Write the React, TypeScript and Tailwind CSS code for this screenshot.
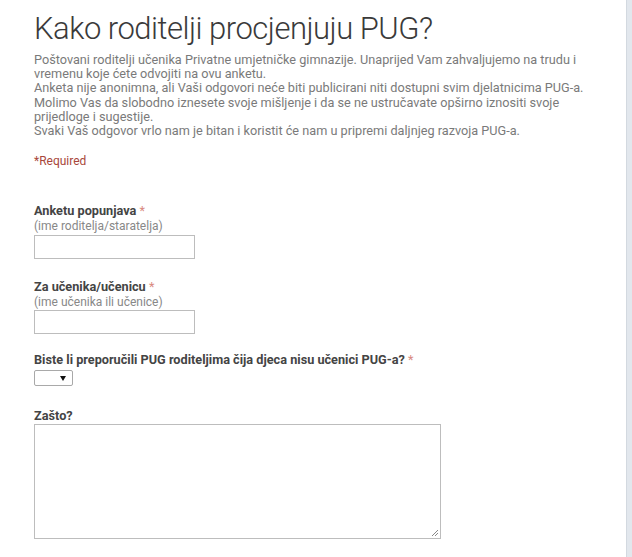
import React from "react";

export default function App() {
  const font = { fontFamily: "Roboto, 'Noto Sans', sans-serif" };
  return (
    <div className="flex h-[557px] w-[632px] overflow-hidden bg-[#e2e7ed]" style={font}>
      <div className="h-full w-[627px] border-r border-[#d3d9e0] bg-white pl-[34px] pt-[10px]">
        <h1 className="text-[31px] font-light leading-[38px] tracking-[-0.5px] text-[#3a3a3a]">
          Kako roditelji procjenjuju PUG?
        </h1>
        <div className="mt-[5px] text-[12.7px] leading-[14.2px] text-[#7a7a7a]">
          <p>Poštovani roditelji učenika Privatne umjetničke gimnazije. Unaprijed Vam zahvaljujemo na trudu i</p>
          <p>vremenu koje ćete odvojiti na ovu anketu.</p>
          <p>Anketa nije anonimna, ali Vaši odgovori neće biti publicirani niti dostupni svim djelatnicima PUG-a.</p>
          <p>Molimo Vas da slobodno iznesete svoje mišljenje i da se ne ustručavate opširno iznositi svoje</p>
          <p>prijedloge i sugestije.</p>
          <p>Svaki Vaš odgovor vrlo nam je bitan i koristit će nam u pripremi daljnjeg razvoja PUG-a.</p>
        </div>
        <div className="mt-[16px] text-[12px] leading-[14px] text-[#a8473b]">*Required</div>

        <div className="mt-[35px]">
          <div className="text-[12.7px] font-bold leading-[16px] text-[#444]">
            Anketu popunjava <span className="font-normal text-[#d98a80]">*</span>
          </div>
          <div className="text-[12px] leading-[15px] text-[#888]">(ime roditelja/staratelja)</div>
          <div className="mt-[1px] h-[24px] w-[161px] border border-[#bdbdbd] bg-white" />
        </div>

        <div className="mt-[20px]">
          <div className="text-[12.7px] font-bold leading-[16px] text-[#444]">
            Za učenika/učenicu <span className="font-normal text-[#d98a80]">*</span>
          </div>
          <div className="text-[12px] leading-[15px] text-[#888]">(ime učenika ili učenice)</div>
          <div className="mt-[0px] h-[24px] w-[161px] border border-[#bdbdbd] bg-white" />
        </div>

        <div className="mt-[18px]">
          <div className="text-[12.7px] font-bold leading-[16px] text-[#444]">
            Biste li preporučili PUG roditeljima čija djeca nisu učenici PUG-a?{" "}
            <span className="font-normal text-[#d98a80]">*</span>
          </div>
          <div className="mt-[2px] flex h-[16px] w-[39px] items-center justify-end rounded-[2px] border border-[#a9a9a9] bg-white pr-[6px]">
            <svg width="6" height="5" viewBox="0 0 6 5">
              <path d="M0 0 H6 L3 5 Z" fill="#111" />
            </svg>
          </div>
        </div>

        <div className="mt-[22px]">
          <div className="text-[12.7px] font-bold leading-[16px] text-[#444]">Zašto?</div>
          <div className="relative mt-0 h-[115px] w-[407px] border border-[#bdbdbd] bg-white">
            <svg className="absolute bottom-[1px] right-[1px]" width="8" height="8" viewBox="0 0 8 8">
              <path d="M7 1 L1 7 M7 4 L4 7" stroke="#888" strokeWidth="1" />
            </svg>
          </div>
        </div>
      </div>
    </div>
  );
}
